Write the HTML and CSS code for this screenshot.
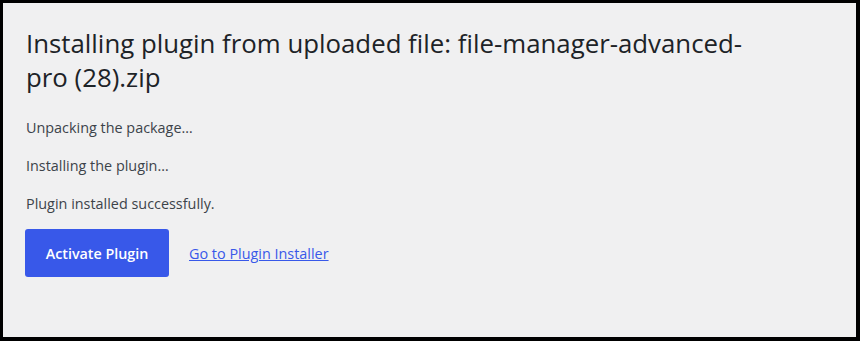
FILE: index.html
```html
<!DOCTYPE html>
<html>
<head>
<meta charset="utf-8">
<link rel="stylesheet" href="styles.css">
</head>
<body>
<div class="frame">
  <div class="wrap">
    <h1 class="title">Installing plugin from uploaded file: file-manager-advanced-pro (28).zip</h1>
    <p class="msg">Unpacking the package…</p>
    <p class="msg">Installing the plugin…</p>
    <p class="msg">Plugin installed successfully.</p>
    <div class="actions">
      <a class="btn" href="#">Activate Plugin</a>
      <a class="link" href="#">Go to Plugin Installer</a>
    </div>
  </div>
</div>
</body>
</html>
```
FILE: styles.css
```css
html, body {
  margin: 0;
  padding: 0;
}
body {
  width: 860px;
  height: 341px;
  background: #000;
  font-family: "Open Sans", "Noto Sans", sans-serif;
  color: #3c434a;
}
.frame {
  box-sizing: border-box;
  width: 860px;
  height: 341px;
  border-style: solid;
  border-color: #000;
  border-width: 3px 4px 4px 3px;
  background: #f0f0f1;
}
.wrap {
  padding: 23px 0 0 23px;
  width: 745px;
}
.title {
  margin: 0;
  font-size: 25.8px;
  font-weight: 400;
  line-height: 34px;
  color: #1d2327;
}
.msg {
  margin: 0;
  font-size: 14.4px;
  line-height: 20px;
  margin-top: 18px;
}
.msg:first-of-type {
  margin-top: 24px;
}
.actions {
  display: flex;
  align-items: center;
  gap: 20px;
  margin-top: 15px;
  margin-left: -1px;
}
.btn {
  display: flex;
  align-items: center;
  justify-content: center;
  width: 144px;
  height: 48px;
  background: #3858e9;
  color: #fff;
  border-radius: 3px;
  font-weight: 600;
  font-size: 14.3px;
  text-decoration: none;
}
.link {
  color: #3858e9;
  font-size: 14.4px;
}
```
